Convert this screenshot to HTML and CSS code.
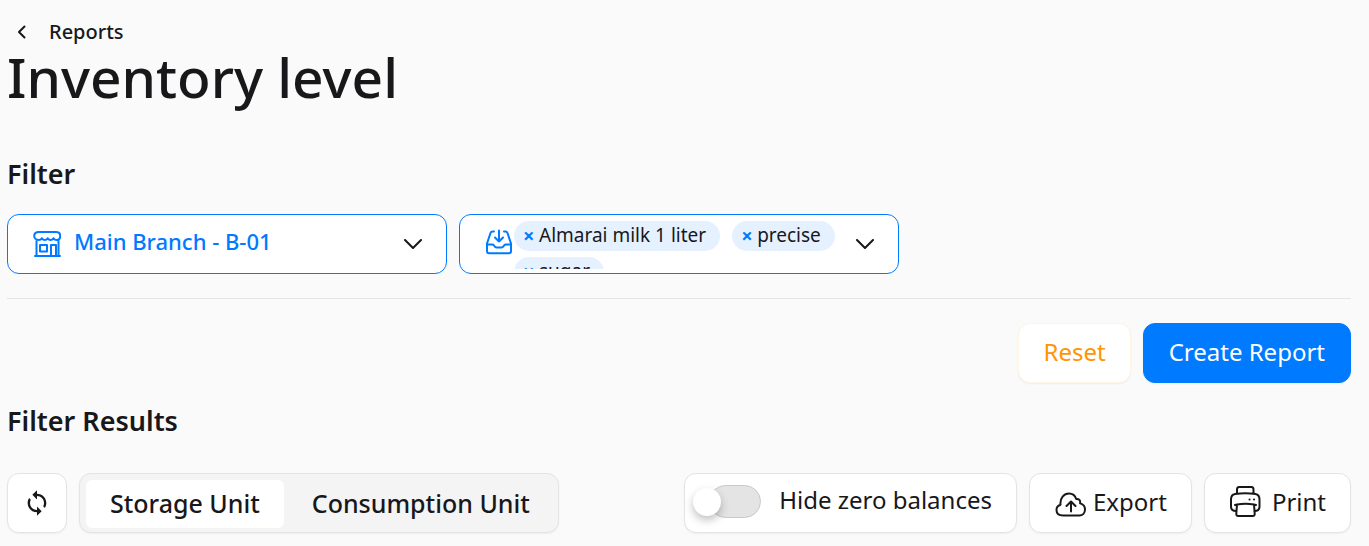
FILE: index.html
```html
<!DOCTYPE html>
<html lang="en">
  <head>
    <meta charset="utf-8">
    <meta name="viewport" content="width=device-width, initial-scale=1">
    <title>Inventory level</title>
    <link rel="stylesheet" href="styles.css">
  </head>
  <body>
    <main class="page">
      <a class="back-link" href="#">
        <svg width="10" height="14" viewBox="0 0 10 14"><path d="M7.500 1.500 2 7l5.500 5.500" /></svg>
        Reports
      </a>
      <h1>Inventory level</h1>

      <h2>Filter</h2>
      <form class="filters">
        <div class="field">
          <svg class="field-icon" width="28" height="28" viewBox="0 0 28 28">
            <path d="M3.500 12V26M25.500 12V26M2 27h25" />
            <path d="M6 3h17c3 0 4.200 1.700 4.200 4s-1.500 4-3.500 4c-1.800 0-2.800-1-3.200-1.800-.8 1.200-1.800 1.800-2.900 1.800s-2.200-.6-2.900-1.800c-.8 1.200-1.800 1.800-2.900 1.800s-2.100-.6-2.900-1.800c-.5.900-1.500 1.800-3.200 1.800-2.500 0-4.500-1.700-4.500-4S3 3 6 3z" />
            <path d="M7 16h7v6.500H7zM18 26.500V16h5V26.500" />
          </svg>
          <select class="field-select" aria-label="Branch">
            <option>Main Branch - B-01</option>
          </select>
          <svg class="chevron" width="18" height="10" viewBox="0 0 18 10"><path d="m1 1 8 8 8-8" /></svg>
        </div>

        <div class="field">
          <svg class="field-icon" width="28" height="28" viewBox="0 0 28 28">
            <path d="M9 2.500H7.500C6.500 2.500 5.800 3.100 5.500 4L2 14.500v7.500c0 1.500.8 2.200 2 2.200h20c1.200 0 2-.7 2-2.200v-7.500L22.500 4C22.200 3.100 21.500 2.500 20.500 2.500H19" />
            <path d="M2 15.500h5c1 0 1.500.3 2 1l.5.800c.5.800 1 1.200 2 1.200h5c1 0 1.500-.4 2-1.200l.5-.8c.5-.7 1-1 2-1h5M14 1.500v11M10 8.500l4 4 4-4" />
          </svg>
          <ul class="tags">
            <li class="tag"><button type="button" aria-label="Remove Almarai milk 1 liter">×</button>Almarai milk 1 liter</li>
            <li class="tag"><button type="button" aria-label="Remove precise">×</button>precise</li>
            <li class="tag"><button type="button" aria-label="Remove sugar">×</button>sugar</li>
          </ul>
          <svg class="chevron" width="18" height="10" viewBox="0 0 18 10"><path d="m1 1 8 8 8-8" /></svg>
        </div>
      </form>

      <div class="actions">
        <button class="btn btn-reset" type="button">Reset</button>
        <button class="btn btn-primary" type="button">Create Report</button>
      </div>

      <h2>Filter Results</h2>
      <div class="toolbar">
        <button class="btn btn-icon" type="button" aria-label="Refresh">
          <svg width="28" height="28" viewBox="0 0 24 24"><path d="M12 4V1L8 5l4 4V6c3.310 0 6 2.690 6 6 0 1.010-.25 1.970-.7 2.800l1.460 1.460C19.540 15.030 20 13.570 20 12c0-4.420-3.580-8-8-8zm0 14c-3.310 0-6-2.690-6-6 0-1.010.25-1.970.7-2.800L5.240 7.740C4.460 8.970 4 10.430 4 12c0 4.420 3.580 8 8 8v3l4-4-4-4v3z" /></svg>
        </button>
        <div class="tabs">
          <button class="tab active" type="button">Storage Unit</button>
          <button class="tab" type="button">Consumption Unit</button>
        </div>

        <label class="btn toggle" for="hideZero">
          <input type="checkbox" id="hideZero">
          <span>Hide zero balances</span>
        </label>
        <button class="btn btn-export" type="button">
          <svg width="32" height="32" viewBox="0 0 32 32">
            <path d="M9 30.500C5 30.500 2.500 28.300 2.500 25c0-2.600 1.500-4.500 4-5.300C5.800 13 10 8.500 15 8.500c3.700 0 6.200 2.200 7.200 5.500 2.800-.4 4.400 1.500 3.900 4.400 3 .8 4.900 3 4.900 5.900 0 3.700-2.300 6.200-5.800 6.200z" />
            <path d="M17 26.500V17M12.500 21l4.500-4.500 4.500 4.500" />
          </svg>
          Export
        </button>
        <button class="btn btn-print" type="button">
          <svg width="32" height="32" viewBox="0 0 32 32">
            <path d="M8 8.500V4.500C8 2.800 8.700 2 10 2h12.500c1.300 0 2 .8 2 2.500v4M7 26c-3.500 0-5-1.300-5-4.500v-7c0-3 1-5 4-5.500 6.500-.8 14-.8 20.500 0 3 .5 4 2.500 4 5.500v7c0 3.200-1.500 4.500-4.800 4.500" />
            <path d="M8 19.500c5.500-.9 11.500-.9 17 0l.7 9c.1 1.700-.5 2.500-2 2.500H9.300c-1.500 0-2.100-.8-2-2.500zM6 20l2-.5M27 20l-2-.5" />
            <path d="M20.500 14.500h.1M25 14.500h.1" />
          </svg>
          Print
        </button>
      </div>
    </main>
  </body>
</html>
```

FILE: styles.css
```css
* {
  box-sizing: border-box;
}

body {
  margin: 0;
  font-family: "Noto Sans", sans-serif;
  color: #18181b;
  background-color: #fafafa;
}

button,
select {
  font-family: inherit;
  color: inherit;
  cursor: pointer;
}

svg {
  flex-shrink: 0;
  fill: none;
  stroke: currentColor;
  stroke-width: 2;
  stroke-linecap: round;
  stroke-linejoin: round;
}

.page {
  padding: 16px 18px 12px 7px;
}

.back-link {
  display: flex;
  align-items: center;
  gap: 22px;
  width: fit-content;
  padding-left: 10px;
  font-size: 20px;
  line-height: 32px;
  font-weight: 500;
  color: inherit;
  text-decoration: none;
}

h1 {
  margin: 0 0 42px;
  font-size: 55px;
  line-height: 58px;
  font-weight: 500;
}

h2 {
  margin: 0;
  font-size: 27px;
  line-height: 52px;
  font-weight: 600;
}

.filters {
  display: flex;
  flex-wrap: wrap;
  gap: 12px;
  padding: 14px 0 24px;
  border-bottom: 1px solid #e4e4e7;
}

.field {
  position: relative;
  display: flex;
  width: 440px;
  height: 60px;
  border: 1px solid #007aff;
  border-radius: 12px;
  background-color: #fff;
}

.field-icon {
  position: absolute;
  left: 25px;
  top: 14px;
  color: #007aff;
  pointer-events: none;
}

.chevron {
  position: absolute;
  right: 24px;
  top: 24px;
  pointer-events: none;
}

.field-select {
  width: 100%;
  padding: 0 60px 6px 66px;
  border: 0;
  border-radius: 12px;
  background: none;
  appearance: none;
  font-size: 22px;
  font-weight: 500;
  color: #007aff;
}

.tags {
  display: flex;
  flex-wrap: wrap;
  align-content: flex-start;
  gap: 6px 12px;
  width: 100%;
  height: 48px;
  margin: 6px 50px 0 54px;
  padding: 0;
  overflow: hidden;
  list-style: none;
}

.tag {
  display: flex;
  align-items: center;
  height: 30px;
  padding: 0 14px 2px 9px;
  border-radius: 15px;
  background-color: #e5f1ff;
  font-size: 19px;
  line-height: 28px;
}

.tag button {
  width: 16px;
  padding: 2px 0 0;
  border: 0;
  background: none;
  font-size: 20px;
  line-height: 28px;
  font-weight: 700;
  text-align: left;
  color: #007aff;
}

.actions {
  display: flex;
  justify-content: flex-end;
  gap: 12px;
  padding: 24px 0 12px;
}

.btn {
  display: flex;
  align-items: center;
  justify-content: center;
  height: 60px;
  padding: 0 24px 4px;
  border: 1px solid #e4e4e7;
  border-radius: 12px;
  background-color: #fff;
  box-shadow: 0 1px 2px rgba(0, 0, 0, 0.05);
  font-size: 24px;
  white-space: nowrap;
}

.btn-reset {
  border-color: #fff4e5;
  color: #ff9500;
}

.btn-primary {
  padding: 0 25px 4px;
  border-color: #007aff;
  background-color: #007aff;
  color: #fff;
}

.toolbar {
  display: flex;
  gap: 12px;
  padding-top: 26px;
}

.btn-icon {
  width: 60px;
  padding: 0;
}

.btn-icon svg {
  fill: currentColor;
  stroke: none;
}

.tabs {
  display: flex;
  gap: 4px;
  height: 60px;
  margin-right: auto;
  padding: 6px 4px 4px 6px;
  border: 1px solid #e4e4e7;
  border-radius: 12px;
  background-color: #f4f4f5;
  box-shadow: 0 1px 2px rgba(0, 0, 0, 0.05);
}

.tab {
  padding: 0 24px 2px;
  border: 0;
  border-radius: 6px;
  background: none;
  font-size: 25px;
  font-weight: 500;
}

.tab.active {
  background-color: #fff;
}

.toggle {
  gap: 18px;
  cursor: pointer;
}

.toggle span {
  padding-bottom: 4px;
}

.toggle input {
  position: relative;
  width: 52px;
  height: 33px;
  margin: 0;
  border: 1px solid #c9c9c9;
  border-radius: 17px;
  background-color: #e4e4e4;
  appearance: none;
}

.toggle input::before {
  content: "";
  position: absolute;
  left: -17px;
  top: 2px;
  width: 28px;
  height: 28px;
  border-radius: 50%;
  background-color: #fff;
  box-shadow: 0 4px 8px rgba(0, 0, 0, 0.25);
}

.toggle input:checked {
  background-color: #007aff;
}

.toggle input:checked::before {
  left: 22px;
}

.btn-export {
  gap: 7px;
}

.btn-print {
  gap: 11px;
}
```
